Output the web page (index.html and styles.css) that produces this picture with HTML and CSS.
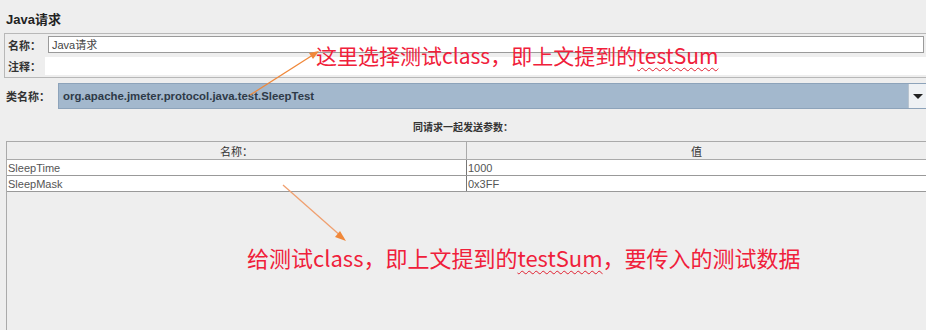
FILE: index.html
```html
<!DOCTYPE html>
<html>
<head>
    <title>Java请求</title>
    <meta charset="utf-8">
    <link rel="stylesheet" href="styles.css">
</head>
<body>
    <div id="whole">
        <h1 class="title">Java请求</h1>

        <div class="namePanel">
            <div class="row">
                <label class="lbl">名称：</label>
                <div class="field nameField">Java请求</div>
            </div>
            <div class="row">
                <label class="lbl">注释：</label>
                <div class="field commentField"></div>
            </div>
        </div>

        <div class="classRow">
            <label class="lbl">类名称：</label>
            <div class="combo">
                <span class="comboText">org.apache.jmeter.protocol.java.test.SleepTest</span>
                <span class="comboBtn"><span class="tri"></span></span>
            </div>
        </div>

        <div class="paramsTitle">同请求一起发送参数：</div>

        <div class="tableBox">
            <table class="argTable">
                <tr>
                    <th class="colName">名称：</th>
                    <th>值</th>
                </tr>
                <tr>
                    <td>SleepTime</td>
                    <td>1000</td>
                </tr>
                <tr>
                    <td>SleepMask</td>
                    <td>0x3FF</td>
                </tr>
            </table>
        </div>

        <!-- annotations drawn over the screenshot -->
        <svg class="arrows" width="926" height="330">
            <line x1="250" y1="95" x2="316" y2="53" stroke="#f0883a" stroke-width="1.3"/>
            <polygon points="319,51 309,53 313,59" fill="#f0883a"/>
            <line x1="283" y1="185" x2="342" y2="237" stroke="#f0a070" stroke-width="1.3"/>
            <polygon points="346,241 335,237 340,231" fill="#f0883a"/>
        </svg>
        <div class="note noteTop">这里选择测试class，即上文提到的<span class="wavy">testSum</span></div>
        <div class="note noteBottom">给测试class，即上文提到的<span class="wavy">testSum</span>，要传入的测试数据</div>
    </div>
</body>
</html>
```

FILE: styles.css
```css
body {
    margin: 0;
    background-color: #eeeeee;
    font-family: "Liberation Sans", "Noto Sans CJK SC", sans-serif;
    font-size: 11px;
    color: #333333;
}

#whole {
    position: relative;
    width: 926px;
    height: 330px;
    overflow: hidden;
}

.title {
    margin: 0;
    padding: 9px 0 0 6px;
    height: 22px;
    font-size: 13px;
    font-weight: bold;
    color: #222222;
}

.namePanel {
    margin: 2px 0 0 4px;
    border: 1px solid #b8b8b8;
    border-right: none;
    padding: 2px 0 2px 3px;
    display: flex;
    flex-direction: column;
    gap: 4px;
}

.row {
    display: flex;
    align-items: center;
}

.lbl {
    font-weight: bold;
    color: #333333;
    white-space: nowrap;
}

.field {
    background-color: #ffffff;
    height: 16px;
    line-height: 16px;
    padding-left: 3px;
    color: #444444;
}

.nameField {
    margin-left: 7px;
    flex: 1;
    margin-right: 2px;
    border: 1px solid #9a9a9a;
    height: 15px;
}

.commentField {
    margin-left: 4px;
    flex: 1;
    height: 18px;
}

.classRow {
    display: flex;
    align-items: center;
    margin-top: 5px;
    padding-left: 6px;
}

.combo {
    margin-left: 8px;
    flex: 1;
    height: 24px;
    display: flex;
    background-color: #a3b8cd;
    border: 1px solid #8da3ba;
    border-right: none;
}

.comboText {
    flex: 1;
    line-height: 24px;
    padding-left: 4px;
    font-weight: bold;
    font-size: 11.4px;
    color: #2e3a48;
}

.comboBtn {
    width: 17px;
    background-color: #eef1f4;
    border-left: 1px solid #b9c4cf;
    display: flex;
    align-items: center;
    justify-content: center;
}

.tri {
    width: 0;
    height: 0;
    border-left: 5px solid transparent;
    border-right: 5px solid transparent;
    border-top: 5px solid #222222;
}

.paramsTitle {
    margin-top: 12px;
    text-align: center;
    font-weight: bold;
    font-size: 10px;
    height: 20px;
    line-height: 14px;
}

.tableBox {
    margin: 0 0 0 6px;
    height: 200px;
    border-left: 1px solid #aaaaaa;
    border-top: 1px solid #aaaaaa;
}

.argTable {
    width: 920px;
    border-collapse: collapse;
    table-layout: fixed;
}

.argTable th {
    height: 17px;
    font-weight: normal;
    color: #333333;
    border-bottom: 1px solid #aaaaaa;
    border-right: 1px solid #aaaaaa;
    padding: 0;
}

.colName {
    width: 459px;
}

.argTable td {
    background-color: #ffffff;
    height: 15px;
    padding: 0 0 0 1px;
    color: #555555;
    border-bottom: 1px solid #999999;
    border-right: 1px solid #777777;
}

.arrows {
    position: absolute;
    left: 0;
    top: 0;
}

.note {
    position: absolute;
    font-family: "Noto Sans CJK SC", sans-serif;
    color: #f0203a;
    white-space: nowrap;
}

.noteTop {
    left: 316px;
    top: 41px;
    font-size: 21px;
    line-height: 28px;
}

.noteBottom {
    left: 247px;
    top: 242px;
    font-size: 22px;
    line-height: 30px;
}

.wavy {
    text-decoration: underline wavy #e02030;
    text-decoration-thickness: 1px;
    text-underline-offset: 3px;
}
```
